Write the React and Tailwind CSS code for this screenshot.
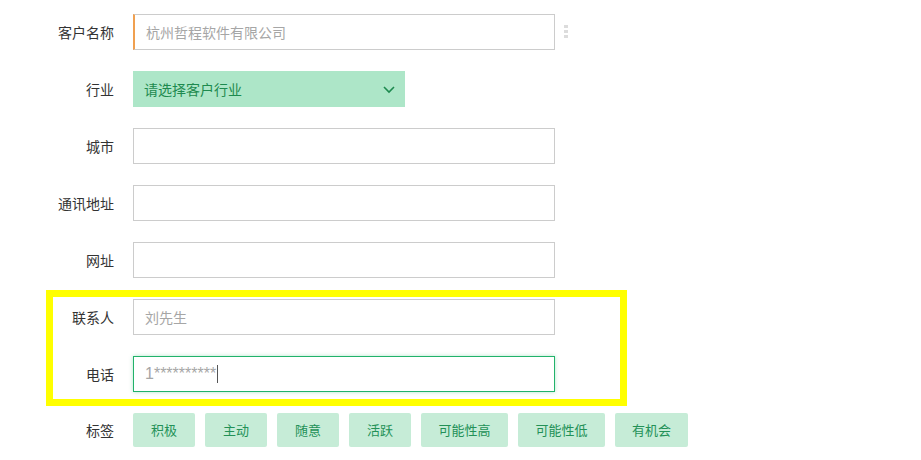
import React from "react";

const font = { fontFamily: '"Noto Sans CJK SC", "Noto Sans", sans-serif' };

function Row({ label, children }) {
  return (
    <div className="flex items-center h-[36px]">
      <div className="w-[114px] text-right text-[14px] text-[#333] leading-none">{label}</div>
      <div className="ml-[19px] flex items-center">{children}</div>
    </div>
  );
}

function Input({ value, placeholder, className = "" }) {
  return (
    <div
      className={`w-[422px] h-[36px] border border-[#cccccc] bg-white flex items-center pl-[11px] text-[14px] ${className}`}
    >
      {placeholder ? <span className="text-[#a6a6a6]">{placeholder}</span> : value}
    </div>
  );
}

const tags = [
  ["积极", "w-[62px]"],
  ["主动", "w-[62px]"],
  ["随意", "w-[62px]"],
  ["活跃", "w-[62px]"],
  ["可能性高", "w-[87px]"],
  ["可能性低", "w-[87px]"],
  ["有机会", "w-[73px]"],
];

export default function App() {
  return (
    <div className="relative w-[921px] h-[460px] bg-white overflow-hidden" style={font}>
      <div className="flex flex-col gap-[21px] pt-[14px]">
        <Row label="客户名称">
          <Input placeholder="杭州哲程软件有限公司" className="border-l-2 border-l-[#f0a050] pl-[10px]" />
          <svg width="6" height="14" viewBox="0 0 6 14" className="ml-[8px]">
            <rect x="1" y="0" width="4" height="3" fill="#dcdcdc" />
            <rect x="1" y="5" width="4" height="3" fill="#dcdcdc" />
            <rect x="1" y="10" width="4" height="3" fill="#dcdcdc" />
          </svg>
        </Row>
        <Row label="行业">
          <div className="w-[272px] h-[36px] bg-[#ade6c8] flex items-center justify-between pl-[11px] pr-[9px] text-[14px] text-[#1d8a4f]">
            <span>请选择客户行业</span>
            <svg width="14" height="14" viewBox="0 0 14 14" fill="none">
              <path d="M2 5 L7 10 L12 5" stroke="#1d8a4f" strokeWidth="1.6" />
            </svg>
          </div>
        </Row>
        <Row label="城市">
          <Input />
        </Row>
        <Row label="通讯地址">
          <Input />
        </Row>
        <Row label="网址">
          <Input />
        </Row>
        <Row label="联系人">
          <Input placeholder="刘先生" />
        </Row>
        <Row label="电话">
          <div className="w-[422px] h-[36px] border border-[#21b26a] bg-white flex items-center pl-[11px] shadow-[0_0_4px_rgba(33,178,106,0.35)]">
            <span
              className="text-[#a6a6a6] text-[16px] leading-none"
              style={{ fontFamily: '"Liberation Sans", Arial, sans-serif' }}
            >
              1**********
            </span>
            <span className="w-px h-[18px] bg-[#555] ml-px" />
          </div>
        </Row>
        <div className="flex items-center h-[34px]">
          <div className="w-[114px] text-right text-[14px] text-[#333] leading-none">标签</div>
          <div className="ml-[19px] flex gap-[10px]">
            {tags.map(([t, w]) => (
              <div
                key={t}
                className={`${w} h-[34px] rounded-[2px] bg-[#c6ecd7] flex items-center justify-center text-[13px] text-[#239157]`}
              >
                {t}
              </div>
            ))}
          </div>
        </div>
      </div>
      <div className="absolute left-[46px] top-[290px] w-[581px] h-[116px] border-[7px] border-[#ffff00] pointer-events-none" />
    </div>
  );
}
